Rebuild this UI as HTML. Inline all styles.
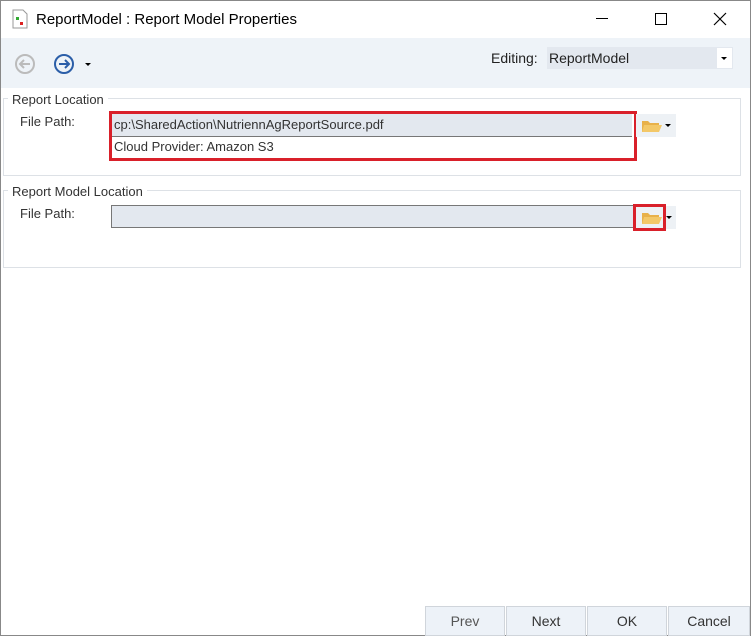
<!DOCTYPE html><html><head><style>
body{margin:0;width:751px;height:636px;overflow:hidden;background:#fff;font-family:"Liberation Sans",sans-serif;position:relative}
.a{position:absolute}
.t{font-size:13px;color:#333}
.b{position:absolute;top:606px;width:78px;height:28px;background:#edf2f8;border:1px solid #d0d5db;text-align:center;line-height:28px;font-size:14px;color:#333}
</style></head><body>
<div class="a" style="left:0;top:0;width:749px;height:634px;border:1px solid #888"></div>
<svg class="a" style="left:12px;top:9px" width="16" height="20"><path d="M1 1h10l4 4v14H1z" fill="#fff" stroke="#999"/><rect x="4" y="8" width="3" height="3" fill="#3a3"/><rect x="8" y="13" width="3" height="3" fill="#d22"/></svg>
<div class="a" style="left:36px;top:11px;font-size:15px;color:#000">ReportModel : Report Model Properties</div>
<div class="a" style="left:596px;top:18px;width:12px;height:1px;background:#000"></div>
<div class="a" style="left:655px;top:13px;width:10px;height:10px;border:1px solid #000"></div>
<svg class="a" style="left:713px;top:12px" width="14" height="14"><path d="M1 1L13 13M13 1L1 13" stroke="#000" stroke-width="1.2"/></svg>
<div class="a" style="left:1px;top:38px;width:749px;height:50px;background:#eef3f8"></div>
<svg class="a" style="left:14px;top:53px" width="22" height="22"><circle cx="11" cy="11" r="9" fill="none" stroke="#bbb" stroke-width="2"/><path d="M16 11H7M10 7l-4 4 4 4" fill="none" stroke="#bbb" stroke-width="2"/></svg>
<svg class="a" style="left:53px;top:53px" width="22" height="22"><circle cx="11" cy="11" r="9" fill="none" stroke="#2b5ea8" stroke-width="2"/><path d="M6 11h9M12 7l4 4-4 4" fill="none" stroke="#2b5ea8" stroke-width="2"/></svg>
<div class="a" style="left:85px;top:63px;border:3px solid transparent;border-top:3px solid #000"></div>
<div class="a" style="left:491px;top:50px;font-size:14px;color:#222">Editing:</div>
<div class="a" style="left:547px;top:47px;width:186px;height:22px;background:#e3e8ef"></div>
<div class="a" style="left:717px;top:48px;width:15px;height:20px;background:#fff"></div>
<div class="a" style="left:721px;top:57px;border:3px solid transparent;border-top:3px solid #000"></div>
<div class="a" style="left:549px;top:50px;font-size:14px;color:#222">ReportModel</div>
<div class="a" style="left:3px;top:98px;width:736px;height:76px;border:1px solid #dde1e6"></div>
<div class="a t" style="left:8px;top:92px;background:#fff;padding:0 4px;font-size:13px">Report Location</div>
<div class="a t" style="left:20px;top:114px">File Path:</div>
<div class="a" style="left:111px;top:113px;width:521px;height:23px;background:#e3e8ef;border-bottom:1px solid #777"></div>
<div class="a t" style="left:114px;top:117px">cp:\SharedAction\NutriennAgReportSource.pdf</div>
<div class="a t" style="left:114px;top:139px">Cloud Provider: Amazon S3</div>
<div class="a" style="left:109px;top:111px;width:522px;height:44px;border:3px solid #d9202a"></div>
<div class="a" style="left:636px;top:114px;width:40px;height:23px;background:#edf1f5"></div>
<svg class="a" style="left:641px;top:118px" width="22" height="16"><path d="M1 3h6l2 2h9v9H1z" fill="#e8b14a"/><path d="M3 7h18l-3 7H1z" fill="#f3c868"/></svg>
<div class="a" style="left:665px;top:124px;border:3px solid transparent;border-top:3px solid #000"></div>
<div class="a" style="left:3px;top:190px;width:736px;height:76px;border:1px solid #dde1e6"></div>
<div class="a t" style="left:8px;top:184px;background:#fff;padding:0 4px;font-size:13px">Report Model Location</div>
<div class="a t" style="left:20px;top:206px">File Path:</div>
<div class="a" style="left:111px;top:205px;width:523px;height:23px;background:#e3e8ef;border:1px solid #777;border-right:none;box-sizing:border-box"></div>
<div class="a" style="left:636px;top:206px;width:40px;height:23px;background:#edf1f5"></div>
<svg class="a" style="left:641px;top:210px" width="22" height="16"><path d="M1 3h6l2 2h9v9H1z" fill="#e8b14a"/><path d="M3 7h18l-3 7H1z" fill="#f3c868"/></svg>
<div class="a" style="left:666px;top:216px;border:3px solid transparent;border-top:3px solid #000"></div>
<div class="a" style="left:633px;top:204px;width:27px;height:21px;border:3px solid #d9202a"></div>
<div class="b" style="left:425px;color:#555">Prev</div>
<div class="b" style="left:506px">Next</div>
<div class="b" style="left:587px">OK</div>
<div class="b" style="left:668px;width:80px">Cancel</div>
</body></html>
